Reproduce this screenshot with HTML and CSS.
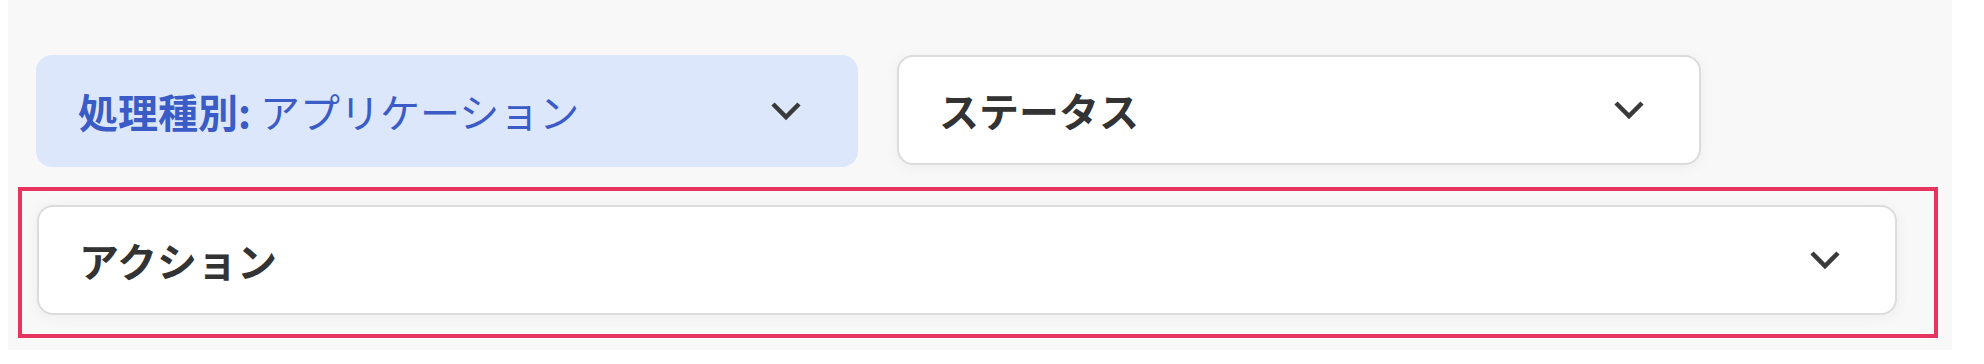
FILE: index.html
```html
<!DOCTYPE html>
<html lang="ja">
  <head>
    <meta charset="UTF-8" />
    <meta name="viewport" content="width=device-width, initial-scale=1.0" />
    <title>フィルター</title>

    <link rel="stylesheet" href="styles.css">
  </head>

  <body>
    <div class="panel">
      <div class="row">
        <div class="select active">
          <span class="label"><b>処理種別:</b> アプリケーション</span>
          <svg class="chev" viewBox="0 0 32 20"><path d="M3 3 L16 16 L29 3" /></svg>
        </div>
        <div class="select status">
          <span class="label"><b>ステータス</b></span>
          <svg class="chev" viewBox="0 0 32 20"><path d="M3 3 L16 16 L29 3" /></svg>
        </div>
      </div>

      <!-- ハイライト枠 -->
      <div class="focus">
        <div class="select">
          <span class="label"><b>アクション</b></span>
          <svg class="chev" viewBox="0 0 32 20"><path d="M3 3 L16 16 L29 3" /></svg>
        </div>
      </div>
    </div>
  </body>
</html>
```

FILE: styles.css
```css
body {
  margin: 0;
  background: #fff;
  font-family: "Noto Sans CJK JP", "Noto Sans", sans-serif;
}

.panel {
  margin-left: 8px;
  width: 1944px;
  height: 350px;
  box-sizing: border-box;
  padding: 55px 0 0 10px;
  background: #f8f8f8;
}

.row {
  display: flex;
  gap: 39px;
  margin-left: 18px;
}

.select {
  display: flex;
  align-items: center;
  justify-content: space-between;
  height: 110px;
  box-sizing: border-box;
  padding: 0 54px 0 40px;
  background: #fff;
  border: 2px solid #dcdcdc;
  border-radius: 16px;
  box-shadow: 0 2px 14px rgba(0, 0, 0, 0.05);
  font-size: 40px;
  color: #333;
}

.select b {
  font-weight: 700;
}

.select.active {
  width: 822px;
  height: 112px;
  background: #dce7fb;
  border-color: #dce7fb;
  color: #3b5bc6;
  box-shadow: none;
}

.select.status {
  width: 804px;
}

.label {
  line-height: 1;
  white-space: nowrap;
}

.chev {
  width: 32px;
  height: 20px;
  flex-shrink: 0;
}

.chev path {
  fill: none;
  stroke: #3a3a3a;
  stroke-width: 4.5;
}

.focus {
  width: 1920px;
  box-sizing: border-box;
  margin-top: 20px;
  padding: 14px 37px 19px 15px;
  border: 4px solid #e8355f;
}
```
